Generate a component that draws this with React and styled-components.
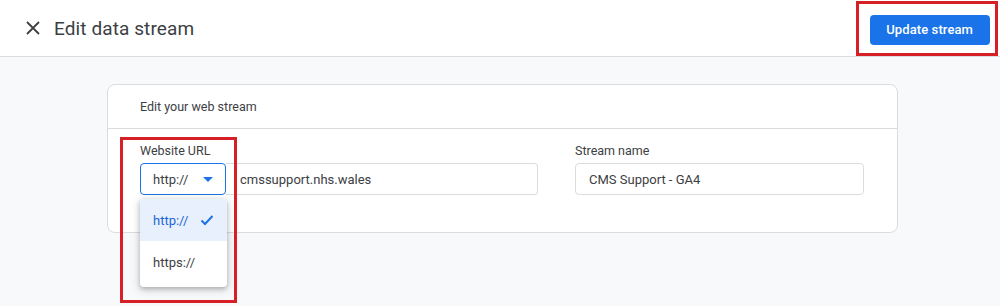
import React from 'react'
import styled, { createGlobalStyle } from 'styled-components'

const Global = createGlobalStyle`
  html, body {
    margin: 0;
    padding: 0;
    background: #f8f9fa;
    font-family: Roboto, "Liberation Sans", Arial, sans-serif;
    color: #3c4043;
  }
`

const Page = styled.div`
  width: 1000px;
  height: 306px;
  overflow: hidden;
  background: #f8f9fa;
`

const Header = styled.header`
  height: 57px;
  background: #fff;
  border-bottom: 1px solid #dadce0;
  display: flex;
  align-items: center;
  justify-content: space-between;
  padding: 0 2px 0 24px;
  box-sizing: border-box;
`

const TitleGroup = styled.div`
  display: flex;
  align-items: center;
  gap: 12px;
`

const CloseButton = styled.button`
  width: 18px;
  height: 18px;
  padding: 0;
  border: 0;
  background: none;
  display: flex;
  align-items: center;
  justify-content: center;
  color: #3c4043;
`

const Title = styled.h1`
  margin: 0;
  font-size: 19px;
  font-weight: 400;
  color: #3c4043;
  letter-spacing: 0.1px;
`

const Highlight = styled.div`
  position: relative;
  display: flex;
  padding: ${({ pad }) => pad};
  &::after {
    content: '';
    position: absolute;
    inset: 0;
    border: 3px solid #d61f26;
    pointer-events: none;
  }
`

const PrimaryButton = styled.button`
  height: 30px;
  padding: 0 17px 0 16px;
  border: 0;
  border-radius: 4px;
  background: #1a73e8;
  color: #fff;
  font-family: inherit;
  font-size: 13px;
  font-weight: 500;
  letter-spacing: 0.1px;
`

const Main = styled.main`
  padding: 27px 0 0 107px;
`

const Card = styled.section`
  width: 791px;
  box-sizing: border-box;
  background: #fff;
  border: 1px solid #dadce0;
  border-radius: 8px;
`

const CardHeader = styled.div`
  height: 43px;
  display: flex;
  align-items: center;
  padding-left: 32px;
  border-bottom: 1px solid #dadce0;
  font-size: 12.5px;
  color: #3c4043;
`

const CardBody = styled.div`
  display: flex;
  gap: 37px;
  padding: 16px 32px 37px;
`

const Field = styled.div`
  display: flex;
  flex-direction: column;
  gap: 6px;
`

const Label = styled.label`
  font-size: 12.5px;
  color: #3c4043;
  line-height: 12px;
`

const InputRow = styled.div`
  display: flex;
`

const SelectWrap = styled.div`
  position: relative;
`

const Select = styled.div`
  width: 86px;
  height: 32px;
  box-sizing: border-box;
  border: 1px solid #1a73e8;
  border-radius: 4px;
  display: flex;
  align-items: center;
  justify-content: space-between;
  padding: 0 12px 0 12px;
  font-size: 13px;
  color: #3c4043;
  background: #fff;
`

const Arrow = styled.span`
  width: 0;
  height: 0;
  border-left: 5px solid transparent;
  border-right: 5px solid transparent;
  border-top: 5px solid #1a73e8;
`

const TextInput = styled.div`
  width: ${({ w }) => w}px;
  height: 32px;
  box-sizing: border-box;
  border: 1px solid #dadce0;
  border-radius: ${({ joined }) => (joined ? '0 4px 4px 0' : '4px')};
  border-left-width: ${({ joined }) => (joined ? 0 : 1)}px;
  display: flex;
  align-items: center;
  padding-left: ${({ joined }) => (joined ? 14 : 13)}px;
  font-size: 13px;
  color: #3c4043;
  background: #fff;
`

const Menu = styled.ul`
  position: absolute;
  top: 36px;
  left: 0;
  width: 87px;
  margin: 0;
  padding: 0 0 4px;
  list-style: none;
  background: #fff;
  border-radius: 4px;
  box-shadow: 0 2px 4px rgba(60, 64, 67, 0.3), 0 2px 8px 2px rgba(60, 64, 67, 0.15);
  z-index: 2;
`

const MenuItem = styled.li`
  height: 42px;
  display: flex;
  align-items: center;
  justify-content: space-between;
  padding: 0 13px 0 13px;
  font-size: 13px;
  color: ${({ selected }) => (selected ? '#1967d2' : '#3c4043')};
  background: ${({ selected }) => (selected ? '#e8f0fe' : 'transparent')};
  border-radius: ${({ selected }) => (selected ? '4px 4px 0 0' : '0')};
`

const Annotation = styled.div`
  position: absolute;
  left: -20px;
  top: -8px;
  width: 117px;
  height: 166px;
  box-sizing: border-box;
  border: 3px solid #d61f26;
  pointer-events: none;
  z-index: 3;
`

const FieldWrap = styled.div`
  position: relative;
`

const App = () => {
  return (
    <>
      <Global />
      <Page>
        <Header>
          <TitleGroup>
            <CloseButton aria-label='Close'>
              <svg width='14' height='14' viewBox='0 0 14 14'>
                <path d='M1 1 L13 13 M13 1 L1 13' stroke='#3c4043' strokeWidth='1.8' />
              </svg>
            </CloseButton>
            <Title>Edit data stream</Title>
          </TitleGroup>
          <Highlight pad='14px 8px 11px 14px'>
            <PrimaryButton>Update stream</PrimaryButton>
          </Highlight>
        </Header>
        <Main>
          <Card>
            <CardHeader>Edit your web stream</CardHeader>
            <CardBody>
              <FieldWrap>
                <Annotation />
                <Field>
                  <Label>Website URL</Label>
                  <InputRow>
                    <SelectWrap>
                      <Select>
                        http://
                        <Arrow />
                      </Select>
                      <Menu>
                        <MenuItem selected>
                          http://
                          <svg width='14' height='12' viewBox='0 0 14 12'>
                            <path d='M1.5 6.5 L5 10 L12.5 2' fill='none' stroke='#1a73e8' strokeWidth='2' />
                          </svg>
                        </MenuItem>
                        <MenuItem>https://</MenuItem>
                      </Menu>
                    </SelectWrap>
                    <TextInput w={312} joined>cmssupport.nhs.wales</TextInput>
                  </InputRow>
                </Field>
              </FieldWrap>
              <Field>
                <Label>Stream name</Label>
                <TextInput w={289}>CMS Support - GA4</TextInput>
              </Field>
            </CardBody>
          </Card>
        </Main>
      </Page>
    </>
  )
}

export default App
